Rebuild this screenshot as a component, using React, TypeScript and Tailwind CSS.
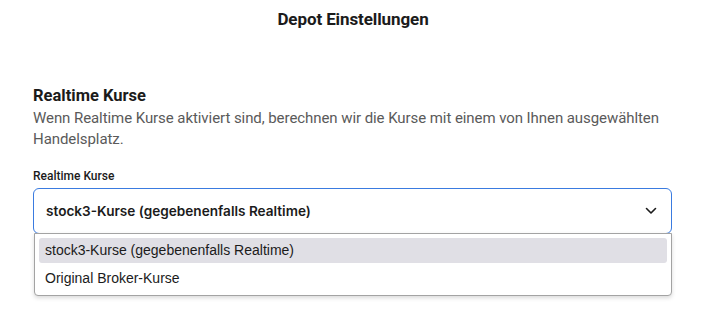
import React from "react";

export default function App() {
  return (
    <div className="w-[706px] h-[314px] bg-white overflow-hidden" style={{ fontFamily: "Roboto, sans-serif" }}>
      <div className="h-[40px] flex items-center justify-center">
        <h1 className="text-[17px] font-bold text-[#1b1b1b] tracking-[-0.1px]">Depot Einstellungen</h1>
      </div>
      <div className="px-[33px] pt-[44px]">
        <h2 className="text-[16.5px] font-bold text-[#1b1b1b] leading-[24px]">Realtime Kurse</h2>
        <p className="text-[15px] text-[#5a5a5a] leading-[21px] tracking-[-0.07px]">
          Wenn Realtime Kurse aktiviert sind, berechnen wir die Kurse mit einem von Ihnen ausgewählten Handelsplatz.
        </p>
        <div className="mt-[18px] text-[12px] font-medium text-[#1b1b1b] leading-[16px]">Realtime Kurse</div>
        <div className="mt-[4px] relative w-[639px]">
          <div className="h-[46px] border border-[#3a7be0] rounded-[6px] flex items-center justify-between pl-[12px] pr-[14px]">
            <span className="text-[13.6px] font-semibold text-[#1b1b1b]" style={{ fontFamily: "Inter, sans-serif" }}>
              stock3-Kurse (gegebenenfalls Realtime)
            </span>
            <svg width="12" height="8" viewBox="0 0 12 8" fill="none">
              <path d="M1.5 1.5 L6 6 L10.5 1.5" stroke="#1b1b1b" strokeWidth="1.6" strokeLinecap="round" strokeLinejoin="round" />
            </svg>
          </div>
          <div
            className="absolute left-[1px] right-0 top-[45px] h-[63px] bg-white border border-[#a3a3a3] rounded-b-[4px] shadow-[0_2px_4px_rgba(0,0,0,0.15)] p-[4px]"
            style={{ fontFamily: "'Liberation Sans', Arial, sans-serif" }}
          >
            <div className="h-[25px] bg-[#e0dfe5] rounded-[3px] flex items-center pl-[6px] text-[14px] text-[#1b1b1b]">
              stock3-Kurse (gegebenenfalls Realtime)
            </div>
            <div className="h-[25px] mt-[3px] flex items-center pl-[6px] text-[14px] text-[#1b1b1b]">
              Original Broker-Kurse
            </div>
          </div>
        </div>
      </div>
    </div>
  );
}
